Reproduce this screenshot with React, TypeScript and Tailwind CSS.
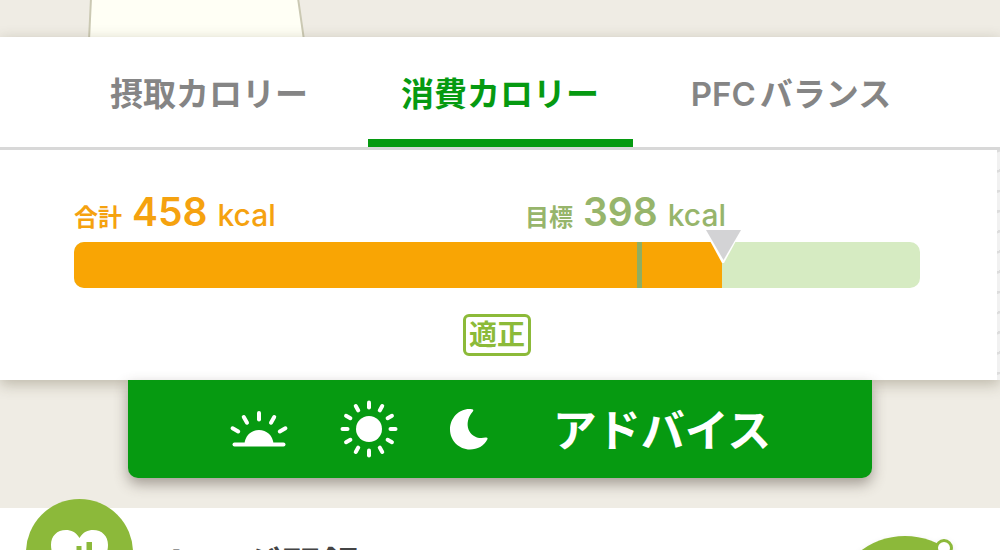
const TABS = [
  { id: 'intake', latin: '', label: '摂取カロリー' },
  { id: 'burned', latin: '', label: '消費カロリー' },
  { id: 'pfc', latin: 'PFC', label: 'バランス' },
];

const TOTAL_PERCENT = 76.6;
const GOAL_PERCENT = 66.6;

// evenly spaced rays around the sun, in degrees
const SUN_RAYS = [0, 30, 60, 90, 120, 150, 180, 210, 240, 270, 300, 330];
const SUNRISE_RAYS = [-60, -30, 0, 30, 60];

function SunriseIcon() {
  return (
    <svg width="60" height="60" viewBox="0 0 60 60" fill="#fff" stroke="#fff" strokeWidth="4" strokeLinecap="round" aria-hidden="true">
      <path d="M15.5 45C16 36.500 22.500 31 30 31S44 36.500 44.500 45Z" stroke="none" />
      <path d="M5.500 45.500H54.500" />
      {SUNRISE_RAYS.map((deg) => (
        <path key={deg} d="M30 14V20.500" transform={`rotate(${deg} 30 44.500)`} />
      ))}
    </svg>
  );
}

function SunIcon() {
  return (
    <svg width="60" height="60" viewBox="0 0 60 60" fill="#fff" stroke="#fff" strokeWidth="4" strokeLinecap="round" aria-hidden="true">
      <circle cx="30" cy="30" r="13" stroke="none" />
      {SUN_RAYS.map((deg) => (
        <path key={deg} d="M30 3.500V8.500" transform={`rotate(${deg} 30 30)`} />
      ))}
    </svg>
  );
}

function MoonIcon() {
  return (
    <svg width="60" height="60" viewBox="0 0 60 60" fill="#fff" aria-hidden="true">
      <path d="M33 10.200C34.500 10.500 34.700 11.400 33.800 12.500C22.500 25.500 31 42 46.500 38.600C48.300 38.200 49 39 48.300 40.500C45 47 38.500 50.500 31 50.500C20 50.500 11 41.500 11 30.500C11 18.500 21 8.500 33 10.200Z" />
    </svg>
  );
}

function Amount({ label, value }: { label: string; value: number }) {
  return (
    <div className="flex items-baseline whitespace-nowrap font-semibold">
      <span className="text-[24px] leading-8 font-bold">{label}</span>
      <span className="ml-[10px] text-[39px] leading-[44px]">{value}</span>
      <span className="ml-[10px] text-[30px] leading-8 font-medium">kcal</span>
    </div>
  );
}

function CalorieBar() {
  return (
    <div className="relative h-[46px]">
      <div className="h-full overflow-hidden rounded-[10px] bg-[#d6ebc2]">
        <div className="h-full bg-[#f9a504]" style={{ width: `${TOTAL_PERCENT}%` }} />
      </div>
      <div className="absolute inset-y-0 w-[5px] bg-[#8fae62]" style={{ left: `${GOAL_PERCENT}%` }} />
      <svg
        className="absolute -top-4 -translate-x-1/2"
        style={{ left: `${TOTAL_PERCENT}%` }}
        width="44"
        height="40"
        viewBox="0 0 44 40"
        aria-hidden="true"
      >
        <path d="M3 2H43L24 37H22Z" fill="#fff" />
        <path d="M6 4H41L23.500 34Z" fill="#d3d3d5" />
      </svg>
    </div>
  );
}

export default function App() {
  return (
    <main className="h-screen overflow-hidden bg-[#efece4] font-['Inter','Noto_Sans_CJK_JP',sans-serif]">
      <div className="h-[37px] px-[80px]">
        <svg width="240" height="37" viewBox="0 0 240 37" aria-hidden="true">
          <path d="M11 -2L9 40H224L218 -2Z" fill="#fffff5" stroke="#cbc9b3" strokeWidth="2" />
        </svg>
      </div>

      <section className="relative bg-white shadow-[0_4px_14px_rgba(70,60,30,0.3)]">
        <div role="tablist" className="flex h-[113px] items-stretch justify-center gap-[26px] border-b-[3px] border-[#d8d8d8]">
          {TABS.map((tab) => (
            <button
              key={tab.id}
              type="button"
              role="tab"
              aria-selected={tab.id === 'burned'}
              className="flex w-[265px] items-center justify-center gap-1 whitespace-nowrap border-b-8 border-transparent pt-[14px] text-[33px] font-bold text-[#858585] aria-selected:border-[#069a11] aria-selected:text-[#069a11]"
            >
              {tab.latin && <span className="font-semibold">{tab.latin}</span>}
              <span>{tab.label}</span>
            </button>
          ))}
        </div>

        <div className="flex">
          <div className="flex-1 pt-10 pr-[77px] pb-6 pl-[74px]">
            <div className="flex h-[52px] justify-between">
              <div className="text-[#f5a20f]">
                <Amount label="合計" value={458} />
              </div>
              <div className="w-[395px] text-[#97b56b]">
                <Amount label="目標" value={398} />
              </div>
            </div>
            <CalorieBar />
            <div className="mt-[26px] flex justify-center">
              <span className="rounded-md border-[3px] border-[#8cba39] px-[3px] text-[28px] leading-9 font-bold text-[#8cba39]">
                適正
              </span>
            </div>
          </div>
          <div className="w-[3px] bg-[repeating-linear-gradient(160deg,#dcdcdc_0_2px,#f1f1f1_3px_19px)]" />
        </div>
      </section>

      <div className="relative px-[128px]">
        <button
          type="button"
          className="flex h-[98px] w-full items-center justify-center gap-[50px] rounded-b-[10px] bg-[#069a11] text-white shadow-[0_6px_14px_rgba(70,60,50,0.45)]"
        >
          <SunriseIcon />
          <SunIcon />
          <span className="-ml-[10px]">
            <MoonIcon />
          </span>
          <span className="pt-1 pl-1 text-[44px] leading-none font-bold">アドバイス</span>
        </button>
      </div>

      <section className="relative mt-[30px] flex justify-between bg-white pt-[28px] pr-[20px] pl-[26px]">
        <div className="flex">
          <svg className="-mt-[37px]" width="107" height="107" viewBox="0 0 107 107" aria-hidden="true">
            <circle cx="53.500" cy="53.500" r="53.500" fill="#8cb93a" />
            <path
              d="M53.500 39C50 33 45 31 40 31C31 31 25 37 25 46C25 62 40 73 53.500 84C67 73 82 62 82 46C82 37 76 31 67 31C62 31 57 33 53.500 39Z"
              fill="#fff"
            />
            <path d="M40 51h5v16h-5zM50.500 47h5v20h-5zM60.500 43h5.500v24h-5.500z" fill="#8cb93a" />
          </svg>
          <h2 className="ml-7 pt-[6px] text-[40px] leading-[50px] font-bold text-[#444]">トログ開録</h2>
        </div>
        <svg className="overflow-visible drop-shadow-md" width="150" height="134" viewBox="0 0 150 134" aria-hidden="true">
          <ellipse cx="75" cy="60" rx="67" ry="60" fill="#8cb93a" />
          <circle cx="114" cy="12" r="7.500" fill="#fff" stroke="#8cb93a" strokeWidth="3" />
        </svg>
      </section>
    </main>
  );
}
